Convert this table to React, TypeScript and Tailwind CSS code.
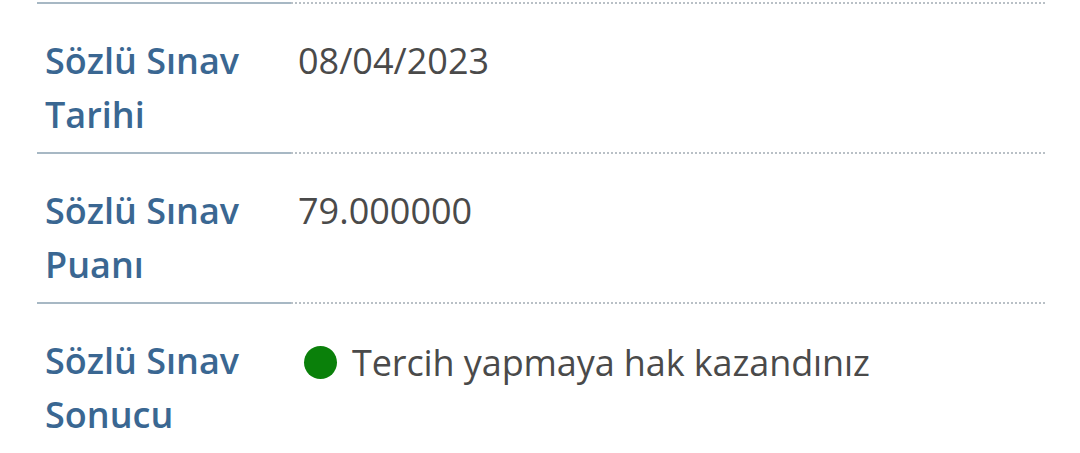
const rows = [
  { label: "Sözlü Sınav Tarihi", value: "08/04/2023" },
  { label: "Sözlü Sınav Puanı", value: "79.000000" },
  { label: "Sözlü Sınav Sonucu", value: "Tercih yapmaya hak kazandınız", status: true },
];

export default function App() {
  return (
    <div className="h-[453px] w-[1080px] overflow-hidden bg-white font-['Open_Sans',sans-serif]">
      <div className="ml-[37px] w-[1008px]">
        {/* bottom edge of previous row */}
        <div className="grid grid-cols-[254px_1fr] pt-[2px]">
          <div className="border-b-2 border-[#a7b8c4]" />
          <div className="border-b-2 border-dotted border-[#b9c0c6]" />
        </div>
        {rows.map((row) => (
          <div key={row.label} className="grid grid-cols-[254px_1fr] text-[36px] leading-[54px]">
            <div
              className={
                row.status
                  ? "h-[160px] pt-[30px] pl-[8px] pr-[20px] font-semibold text-[#3a6792]"
                  : "h-[150px] border-b-2 border-[#a7b8c4] pt-[30px] pl-[8px] pr-[20px] font-semibold text-[#3a6792]"
              }
            >
              {row.label}
            </div>
            <div
              className={
                row.status
                  ? "h-[160px] pt-[32px] pl-[7px] tracking-[-0.1px] text-[#4a4a4a]"
                  : "h-[150px] border-b-2 border-dotted border-[#b9c0c6] pt-[30px] pl-[7px] text-[#4a4a4a]"
              }
            >
              {row.status && (
                <span className="ml-[6px] mr-[15px] inline-block h-[33px] w-[33px] rounded-full bg-[#0a800a] align-[-3px]" />
              )}
              {row.value}
            </div>
          </div>
        ))}
      </div>
    </div>
  );
}
